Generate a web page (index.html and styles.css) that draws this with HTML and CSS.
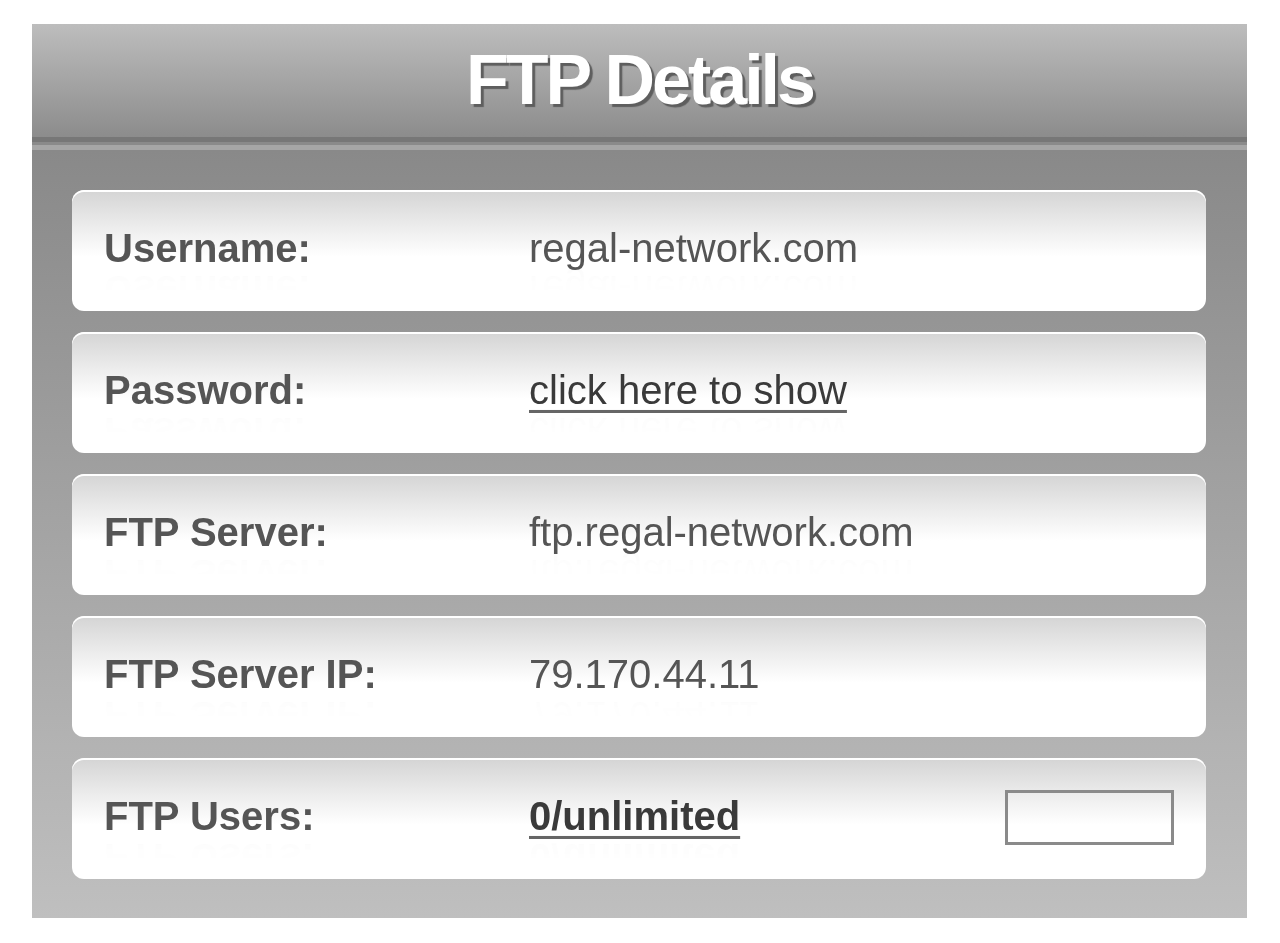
FILE: index.html
```html
<!DOCTYPE html>
<html lang="en">
<head>
<meta charset="utf-8">
<title>FTP Details</title>
<link rel="stylesheet" href="styles.css">
</head>
<body>
<div class="panel">
  <div class="header"><h1 class="title">FTP Details</h1></div>
  <div class="divider"></div>
  <div class="rows">
    <div class="row">
      <span class="label">Username:</span>
      <span class="value">regal-network.com</span>
    </div>
    <div class="row">
      <span class="label">Password:</span>
      <a class="value link" href="#">click here to show</a>
    </div>
    <div class="row">
      <span class="label">FTP Server:</span>
      <span class="value">ftp.regal-network.com</span>
    </div>
    <div class="row">
      <span class="label">FTP Server IP:</span>
      <span class="value">79.170.44.11</span>
    </div>
    <div class="row">
      <span class="label">FTP Users:</span>
      <a class="value link bold" href="#">0/unlimited</a>
      <input class="field" type="text">
    </div>
  </div>
</div>
</body>
</html>
```

FILE: styles.css
```css
html, body {
  margin: 0;
  padding: 0;
  background: #ffffff;
}

body {
  padding: 24px 33px 0 32px;
  font-family: "Liberation Sans", Arial, sans-serif;
}

.panel {
  width: 1215px;
}

.header {
  height: 113px;
  background: linear-gradient(#bdbdbd, #8c8c8c);
  display: flex;
  align-items: center;
  justify-content: center;
}

.title {
  margin: 0;
  padding-bottom: 2px;
  font-size: 70px;
  font-weight: bold;
  letter-spacing: -3px;
  color: #ffffff;
  text-shadow: 3px 3px 1px #5e5e5e;
  line-height: 1;
}

.divider {
  height: 13px;
  background: linear-gradient(#777777 0 5px, #8a8a8a 5px 8px, #a6a6a6 8px 13px);
}

.rows {
  display: flex;
  flex-direction: column;
  gap: 21px;
  padding: 40px 41px 39px 40px;
  background: linear-gradient(#898989, #bfbfbf);
}

.row {
  height: 121px;
  box-sizing: border-box;
  border-radius: 12px;
  background: linear-gradient(#d4d4d4 0%, #ececec 30%, #ffffff 55%, #ffffff 100%);
  box-shadow: inset 0 2px 0 #ffffff;
  display: flex;
  align-items: center;
  padding: 0 32px 4px 32px;
  font-size: 40px;
}

.label {
  width: 425px;
  flex: none;
  font-weight: bold;
  color: #555555;
  -webkit-box-reflect: below -4px linear-gradient(transparent 45%, rgba(0, 0, 0, 0.025));
}

.value {
  color: #555555;
  -webkit-box-reflect: below -4px linear-gradient(transparent 45%, rgba(0, 0, 0, 0.025));
}

.link {
  color: #3a3a3a;
  text-decoration: underline;
  text-decoration-thickness: 3px;
  text-underline-offset: 6px;
  text-decoration-color: #666666;
}

.bold {
  font-weight: bold;
}

.field {
  margin-left: auto;
  width: 169px;
  height: 55px;
  box-sizing: border-box;
  border: 3px solid #8a8a8a;
  background: transparent;
  padding: 0;
  margin-top: 2px;
}
```
